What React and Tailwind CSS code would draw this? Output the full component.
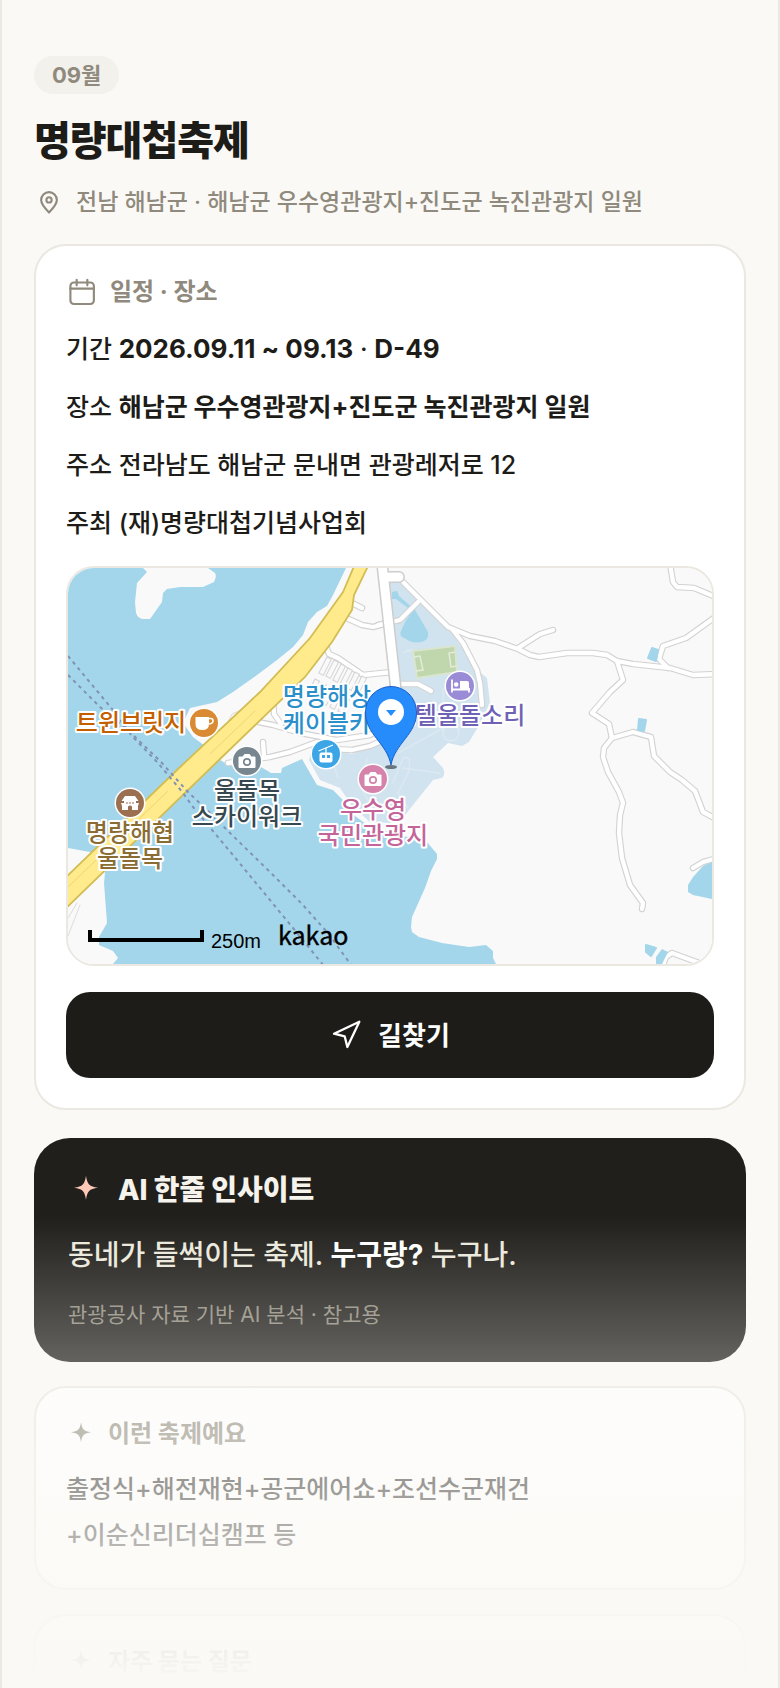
import { Navigation } from "lucide-react";

const roads = [
  "M335 14L380 59L402 68L427 73L450 81L462 87L471 89L499 85L525 85L539 87L549 93L565 96L602 100L625 107L650 106",
  "M384 61L395 75L409 102L412 115L414 137",
  "M450 80L472 66L485 62",
  "M602 -4L605 14L609 19L626 20L650 30",
  "M650 47L618 70L595 78L591 91L600 100",
  "M549 93L555 112L542 124L524 145L541 156L544 170",
  "M544 170L565 164L583 169L586 188L602 204L614 212L627 223L635 244L650 252",
  "M544 170L536 180L535 189L540 204L551 224L555 235L552 247L551 265L554 290L562 317L575 335L574 341",
  "M625 300L635 294L650 290",
  "M594 400L598 389L604 385L634 396",
  "M310 57L332 52L350 34",
  "M334 116L350 116L363 123",
  "M276 49L294 57L305 59L320 55",
  "M284 35L294 40",
  "M258 78L261 86L270 90L295 107L324 104",
  "M160 195L202 189L222 184L249 174",
  "M195 174L196 188",
  "M190 154L205 157L232 165L269 172L302 167L330 150",
  "M205 130L206 146L213 156",
  "M264 181L284 182L302 178L320 170",
];

const ferries = [
  "M0 88L45 142L64 168L90 195L115 225L125 239L169 292L225 360L256 398",
  "M0 107L32 139L62 164L93 194L120 224L139 242L159 262L205 307L234 336L259 364L284 398",
];

const stalls = [
  [259, 89], [266, 92], [273, 96], [280, 100], [287, 104], [294, 108],
  [247, 111], [254, 115], [262, 119], [270, 123], [278, 127],
];

function Label({ x, y, color, children }) {
  return (
    <text x={x} y={y} fill={color} textAnchor="middle" fontSize="24" fontWeight="500" stroke="#ffffff" strokeWidth="4" strokeLinejoin="round" paintOrder="stroke">
      {children}
    </text>
  );
}

function Poi({ x, y, color, children }) {
  return (
    <g transform={`translate(${x} ${y})`}>
      <circle r="15.5" fill="#fff" />
      <circle r="14" fill={color} />
      {children}
    </g>
  );
}

function CameraGlyph({ color }) {
  return (
    <>
      <path d="M-8 -4H-4L-2.500 -6.500H2.500L4 -4H8V6.500H-8Z" fill="#fff" stroke="#fff" strokeLinejoin="round" />
      <circle cy="1" r="3.2" fill="none" stroke={color} strokeWidth="1.7" />
    </>
  );
}

function FestivalMap() {
  return (
    <svg role="img" aria-label="지도" viewBox="0 0 644 396" preserveAspectRatio="xMidYMid slice" className="block h-[396px] w-full">
      <rect width="644" height="396" fill="#f9f9f9" />
      <path
        fill="#a3d6eb"
        d="M0 0H278L265 27L259 38L249 44L240 54L235 67L225 79L209 92L189 107L165 124L149 134L122 140L115 155L125 169L137 178L152 192L162 198L193 199L203 205L213 205L214 200L234 191L242 205L249 217L265 222L277 234L287 248L302 259L335 268L359 274L369 286L369 291L363 303L357 320L344 349L343 359L344 364L351 369L374 375L401 379L418 377L425 383L425 390L428 396H45L50 390L45 383L31 377L31 369L39 355L36 315L37 305L32 292L22 284L0 280Z"
      />
      <path fill="#f9f9f9" d="M75 0L79 4L69 15L67 34L68 45Q70 51 76 51H82L94 34L95 25L99 21L112 19H135L146 14Q149 8 147 5L140 0Z" />
      <path
        fill="#d1e3ef"
        d="M319 10H331L380 59L409 102L419 110L422 135L410 159L401 174L394 178L380 175L365 189L375 200Q378 206 374 210L365 212L337 247L322 255L302 254L285 239L272 220L252 212L241 192L245 176L284 186L322 170Z"
      />
      <g fill="none" stroke="#dce9f2" strokeWidth="1.5">
        <path d="M335 85Q345 78 357 88M336 125Q350 145 342 165M345 150L375 160M330 185L375 160M325 215L335 190Q345 187 340 205L330 225L340 240M300 190L290 215L305 240M262 185L270 210M335 200L372 205M375 120V165M380 140Q395 150 390 165" />
        <circle cx="383" cy="165" r="8" />
      </g>
      <path fill="#a3d6eb" d="M324 24L329 23L331 28L347 42L353 52L360 64Q361 71 356 73Q346 77 338 71Q330 68 333 63L337 54L344 43L328 31L324 31Z" />
      <path fill="#c0d7ae" stroke="#d9e6cd" strokeWidth="2" d="M345 83L387 78L389 104L349 110Z" />
      <path fill="none" stroke="#e3ecd9" strokeWidth="1.5" d="M346 89L352 88L355 102L348 103M387 84L381 85L383 99L389 98" />

      <g fill="none" strokeLinejoin="round" strokeLinecap="round">
        {roads.map((d) => <path key={d} d={d} stroke="#d2d2d2" strokeWidth="6.5" />)}
        {roads.map((d) => <path key={d} d={d} stroke="#ffffff" strokeWidth="4.3" />)}
        <path d="M158 158L164 146L190 135" stroke="#dcdcdc" strokeWidth="1" />
        <path d="M0 350L9 335M0 368L12 337" stroke="#dcdcdc" strokeWidth="1" />
        <path d="M314 -5L330 140M322 9H331" stroke="#cdcdcd" strokeWidth="12" />
        <path d="M314 -5L330 140M322 9H331" stroke="#ffffff" strokeWidth="9" />
      </g>
      <g fill="#f9f9f9" stroke="#d4d4d4">
        {stalls.map(([x, y]) => <rect key={`${x}-${y}`} x={x} y={y} width="5" height="18" transform={`rotate(27 ${x} ${y})`} />)}
      </g>

      <path
        fill="#ffeb8c"
        stroke="#d2bd54"
        strokeWidth="1.8"
        d="M287 -4L275 24L242 70L192 124L110 201L-4 311V342L151 192L237 109L264 74L284 42L286 27L301 -4Z"
      />
      <path fill="none" stroke="#e6d170" strokeWidth="0.8" d="M187 143L142 186M100 223L0 319" />

      <g fill="none" stroke="#8093b5" strokeWidth="2" strokeDasharray="3.5 4">
        {ferries.map((d) => <path key={d} d={d} />)}
      </g>

      <path fill="#a3d6eb" stroke="#a3d6eb" strokeWidth="2" strokeLinejoin="round" d="M584 80L590 82L588 93L580 90ZM571 151L578 152L576 163L570 162ZM578 377L588 380L583 388L578 384Z" />
      <path fill="#a3d6eb" d="M594 381L600 384L594 396H588V389ZM644 294L635 298L625 309L620 317V324L625 327L644 331Z" />

      <Poi x={136} y={155} color="#d98a33">
        <path d="M-8.500 -6H5V1Q5 7 -1.700 7Q-8.500 7 -8.500 1Z" fill="#fff" />
        <path d="M5 -4.500H7Q9 -4.500 9 -2T5 1" fill="none" stroke="#fff" strokeWidth="1.6" />
      </Poi>
      <Poi x={179} y={193} color="#78878f"><CameraGlyph color="#78878f" /></Poi>
      <Poi x={305} y={211} color="#d683ac"><CameraGlyph color="#d683ac" /></Poi>
      <Poi x={258} y={186} color="#3ba5e5">
        <path d="M-7.500 -3L7 -9M0 -6V0" stroke="#fff" strokeWidth="1.3" fill="none" />
        <rect x="-6.500" y="-1.500" width="13" height="10" rx="2" fill="#fff" />
        <path d="M-4 1H-1V4H-4ZM1 1H4V4H1Z" fill="#3ba5e5" />
      </Poi>
      <Poi x={392} y={118} color="#9a8bd6">
        <path d="M-8 -6.500V6.500M9 2V6.500M-8 3.500H9" stroke="#fff" strokeWidth="1.8" fill="none" />
        <circle cx="-3.800" cy="-1.500" r="2.300" fill="#fff" />
        <path d="M0 -5H7Q9 -5 9 -3V3H0Z" fill="#fff" />
      </Poi>
      <Poi x={62} y={235} color="#9a7050">
        <path d="M-5 -7H5L8.500 -2H-8.500ZM-6 -2H6V7H2V3.500Q0 1.500 -2 3.500V7H-6ZM-9 0H-6V7H-8V3ZM9 0H6V7H8V3Z" fill="#fff" />
        <path d="M-4 0H-2M-1 0H1M2 0H4" stroke="#9a7050" strokeWidth="1.2" />
      </Poi>

      <g>
        <Label x={63} y={163} color="#c45f00">트윈브릿지</Label>
        <Label x={259} y={137} color="#2b8fcb">명량해상</Label>
        <Label x={259} y={164} color="#2b8fcb">케이블카</Label>
        <Label x={391} y={156} color="#6f62b5">호텔울돌소리</Label>
        <Label x={179} y={231} color="#37474f">울돌목</Label>
        <Label x={179} y={257} color="#37474f">스카이워크</Label>
        <Label x={305} y={250} color="#c4659a">우수영</Label>
        <Label x={305} y={276} color="#c4659a">국민관광지</Label>
        <Label x={62} y={273} color="#8a6d33">명량해협</Label>
        <Label x={62} y={299} color="#8a6d33">울돌목</Label>
      </g>

      <ellipse cx="323" cy="199" rx="6" ry="2" fill="#3c4650" opacity="0.7" />
      <path d="M323 197C319 175 297 166 297.500 144A25.500 25.500 0 0 1 348.500 144C349 166 327 175 323 197Z" fill="#268bfb" stroke="#1a5fc8" />
      <circle cx="323" cy="144" r="13" fill="#fff" />
      <path d="M318 142H328L323 148Z" fill="#268bfb" />

      <path d="M22 362V372H134V362" fill="none" stroke="#000" strokeWidth="4" />
      <text x="143" y="380" fontSize="20" fill="#000" className="font-['Liberation_Sans',sans-serif]">250m</text>
      <text x="210" y="377" fontSize="25" fontWeight="400" fill="#000" className="font-['Noto_Sans_CJK_KR',sans-serif]" stroke="#000" strokeWidth="0.4">kakao</text>
    </svg>
  );
}

function PinIcon() {
  return (
    <svg aria-hidden="true" viewBox="0 0 24 24" fill="none" stroke="currentColor" strokeWidth="1.7" strokeLinejoin="round" className="size-[30px] shrink-0">
      <path d="M12 20.400C8.500 16.800 5.700 13.500 5.700 10.400a6.300 6.300 0 0 1 12.600 0C18.300 13.500 15.500 16.800 12 20.400z" />
      <circle cx="12" cy="10.300" r="2.100" />
    </svg>
  );
}

function CalendarIcon() {
  return (
    <svg aria-hidden="true" viewBox="0 0 24 24" fill="none" stroke="currentColor" strokeWidth="1.600" strokeLinecap="round" className="size-8 shrink-0">
      <rect x="3.300" y="4.900" width="17.600" height="16.100" rx="2.600" />
      <path d="M3.300 9.500H20.900M8 2.800V7M16 2.800V7" />
    </svg>
  );
}

function Spark({ className }) {
  return (
    <svg aria-hidden="true" viewBox="0 0 24 24" fill="currentColor" className={className}>
      <path d="M12 2.500C12.900 8.300 14.100 9.600 20 10.500C14.100 11.400 12.900 12.700 12 18.500C11.100 12.700 9.900 11.400 4 10.500C9.900 9.600 11.100 8.300 12 2.500Z" />
    </svg>
  );
}

function Card({ className, icon, title, children }) {
  return (
    <section className={`rounded-[32px] border-2 border-[#ebe8e1] bg-white p-[30px] ${className}`}>
      <h2 className="flex h-8 items-center gap-3 text-2xl font-bold text-[#8f8a7d]">
        {icon}
        {title}
      </h2>
      {children}
    </section>
  );
}

export default function App() {
  return (
    <div className="relative h-screen overflow-hidden border-x-2 border-[#ebe9e2] bg-[#faf9f5] px-8 pt-14 font-['Inter','Noto_Sans_CJK_KR',sans-serif] font-medium text-[#1d1c18]" lang="ko">
      <header>
        <span className="inline-flex h-[38px] items-center rounded-full bg-[#f2f1ec] px-[18px] align-top text-[22px] font-bold text-[#8f8a7d]">09월</span>
        <h1 className="mt-5 text-[40px] leading-[54px] font-extrabold tracking-tight">명량대첩축제</h1>
        <p className="mt-4 flex h-9 items-center gap-3 text-[23px] text-[#8f8a7d]">
          <PinIcon />
          전남 해남군 · 해남군 우수영관광지+진도군 녹진관광지 일원
        </p>
      </header>

      <main>
        <Card className="mt-6" icon={<CalendarIcon />} title="일정 · 장소">
          <div className="mt-[18px] flex flex-col gap-3 text-[25px] leading-[46px]">
            <p>기간 <strong className="text-[26px]">2026.09.11 ~ 09.13</strong> · <strong className="text-[26px]">D-49</strong></p>
            <p>장소 <strong>해남군 우수영관광지+진도군 녹진관광지 일원</strong></p>
            <p>주소 전라남도 해남군 문내면 관광레저로 12</p>
            <p>주최 (재)명량대첩기념사업회</p>
          </div>
          <div className="mt-5 overflow-hidden rounded-[28px] border-2 border-[#ebe8e1]">
            <FestivalMap />
          </div>
          <button type="button" className="mt-[26px] flex h-[86px] w-full items-center justify-center gap-4 rounded-3xl bg-[#1d1c18] text-[26px] font-bold text-white">
            <Navigation aria-hidden="true" size={32} strokeWidth={1.7} />
            길찾기
          </button>
        </Card>

        <section className="mt-7 rounded-[36px] bg-[#201f1b] px-[34px] pt-8 pb-[30px]">
          <h2 className="flex h-10 items-center gap-[14px] text-[28px] font-extrabold text-[#f5f3ec]">
            <Spark className="size-9 text-[#ffc9b8]" />
            AI 한줄 인사이트
          </h2>
          <p className="mt-[22px] text-[28px] leading-[46px] text-[#ebe8dc]">
            동네가 들썩이는 축제. <strong className="text-white">누구랑?</strong> 누구나.
          </p>
          <p className="mt-5 text-[21px] leading-[34px] font-normal text-[#8f8a7d]">관광공사 자료 기반 AI 분석 · 참고용</p>
        </section>

        <Card className="mt-6" icon={<Spark className="size-[30px]" />} title="이런 축제예요">
          <p className="mt-4 text-[25px] leading-[46px]">
            출정식+해전재현+공군에어쇼+조선수군재건
            <br />
            +이순신리더십캠프 등
          </p>
        </Card>

        <Card className="mt-6" icon={<Spark className="size-[30px]" />} title="자주 묻는 질문">
          <div className="h-24" />
        </Card>
      </main>

      <div className="pointer-events-none absolute -inset-x-0.5 bottom-0 h-[472px] bg-linear-to-b from-[#faf9f5]/0 to-[#faf9f5]" />
    </div>
  );
}
